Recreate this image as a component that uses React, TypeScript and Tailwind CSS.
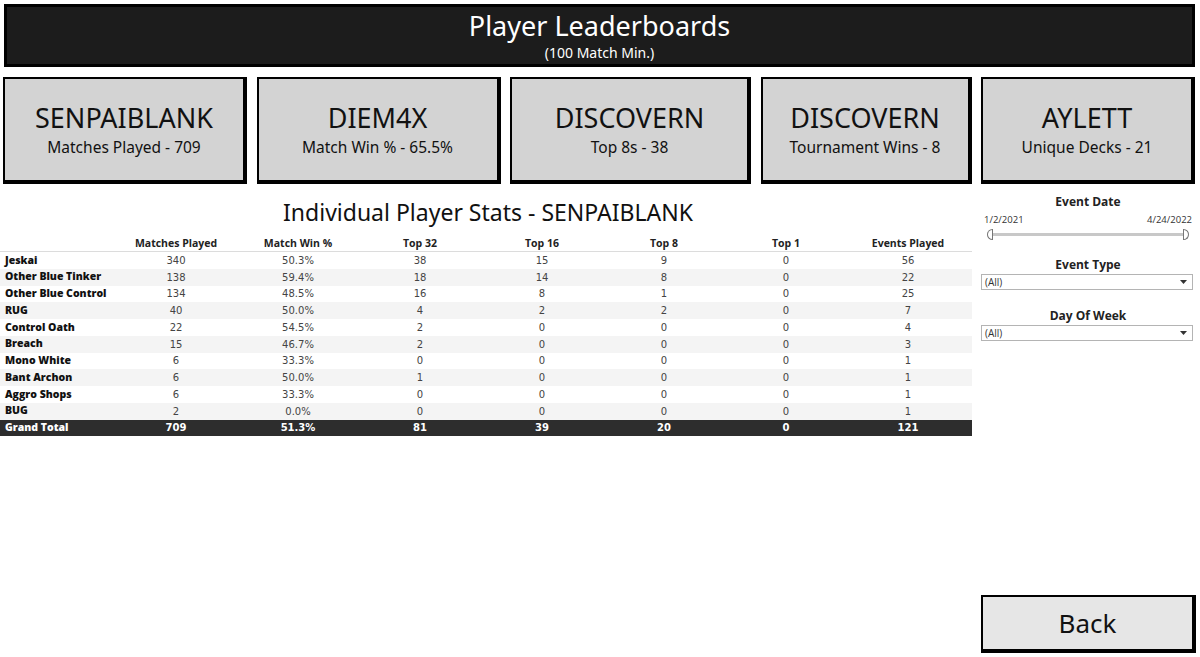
const rows = [
  ['Jeskai', '340', '50.3%', '38', '15', '9', '0', '56'],
  ['Other Blue Tinker', '138', '59.4%', '18', '14', '8', '0', '22'],
  ['Other Blue Control', '134', '48.5%', '16', '8', '1', '0', '25'],
  ['RUG', '40', '50.0%', '4', '2', '2', '0', '7'],
  ['Control Oath', '22', '54.5%', '2', '0', '0', '0', '4'],
  ['Breach', '15', '46.7%', '2', '0', '0', '0', '3'],
  ['Mono White', '6', '33.3%', '0', '0', '0', '0', '1'],
  ['Bant Archon', '6', '50.0%', '1', '0', '0', '0', '1'],
  ['Aggro Shops', '6', '33.3%', '0', '0', '0', '0', '1'],
  ['BUG', '2', '0.0%', '0', '0', '0', '0', '1'],
];

const total = ['Grand Total', '709', '51.3%', '81', '39', '20', '0', '121'];
const cols = ['Matches Played', 'Match Win %', 'Top 32', 'Top 16', 'Top 8', 'Top 1', 'Events Played'];

const cards = [
  { name: 'SENPAIBLANK', sub: 'Matches Played - 709', w: 'w-[244px]' },
  { name: 'DIEM4X', sub: 'Match Win % - 65.5%', w: 'w-[244px]' },
  { name: 'DISCOVERN', sub: 'Top 8s - 38', w: 'w-[241px]' },
  { name: 'DISCOVERN', sub: 'Tournament Wins - 8', w: 'w-[211px]' },
  { name: 'AYLETT', sub: 'Unique Decks - 21', w: 'w-[214px]' },
];

function Caret() {
  return (
    <svg width="7" height="4" viewBox="0 0 7 4" className="mr-[5px]">
      <path d="M0 0h7L3.5 4z" fill="#333" />
    </svg>
  );
}

function Dropdown() {
  return (
    <div className="flex items-center justify-between h-[16px] border border-[#b4b4b4] bg-white pl-[3px] mt-[1px] mr-[2px]">
      <span className="text-[10px] text-[#333] font-['Open_Sans',sans-serif]">(All)</span>
      <Caret />
    </div>
  );
}

export default function App() {
  const sans = "font-['Noto_Sans',sans-serif]";
  return (
    <div className={`w-[1200px] h-[657px] bg-white ${sans} relative overflow-hidden`}>
      <div className="pt-[4px] pl-[4px] pr-[5px]">
        <div className="h-[63px] bg-[#1c1c1c] border-[3px] border-black flex flex-col items-center text-white">
          <div className="text-[27px] leading-[34px] mt-[2px]">Player Leaderboards</div>
          <div className="text-[14px] leading-[18px] mt-[1px]">(100 Match Min.)</div>
        </div>
      </div>

      <div className="flex gap-[9.5px] pl-[3px] mt-[10px]">
        {cards.map((c, i) => (
          <div
            key={i}
            className={`${c.w} h-[107px] bg-[#d3d3d3] border-black border-t-[2px] border-l-[2px] border-r-[4px] border-b-[4px] flex flex-col items-center pt-[22px]`}
          >
            <div className="text-[27px] leading-[34px] text-[#111]">{c.name}</div>
            <div className="text-[15.5px] leading-[20px] text-[#111] mt-[2px]">{c.sub}</div>
          </div>
        ))}
      </div>

      <div className="flex mt-[11px]">
        <div className="w-[972px]">
          <div className="text-center text-[23px] leading-[30px] text-[#111] pl-[4px] mt-[2px]">
            Individual Player Stats - SENPAIBLANK
          </div>
          <div className="mt-[9px] flex h-[16px] items-center border-b border-[#dcdcdc] text-[10.5px] font-bold text-[#222] font-['Open_Sans',sans-serif]">
            <div className="w-[115px]" />
            {cols.map((c) => (
              <div key={c} className="w-[122px] text-center">{c}</div>
            ))}
          </div>
          {rows.map((r, i) => (
            <div
              key={r[0]}
              className={`flex h-[16.75px] items-center text-[10.5px] ${i % 2 ? 'bg-[#f4f4f4]' : 'bg-white'}`}
            >
              <div className="w-[115px] pl-[5px] font-extrabold text-[#111] font-['Open_Sans',sans-serif]">{r[0]}</div>
              {r.slice(1).map((v, j) => (
                <div key={j} className="w-[122px] text-center text-[#444] font-['DejaVu_Sans',sans-serif] text-[10px]">{v}</div>
              ))}
            </div>
          ))}
          <div className="flex h-[16.75px] items-center bg-[#2d2d2d] text-white text-[10.5px] font-bold">
            <div className="w-[115px] pl-[5px] font-extrabold font-['Open_Sans',sans-serif]">{total[0]}</div>
            {total.slice(1).map((v, j) => (
              <div key={j} className="w-[122px] text-center font-['DejaVu_Sans',sans-serif] text-[10px]">{v}</div>
            ))}
          </div>
        </div>

        <div className="w-[214px] ml-[9px] flex flex-col font-['Open_Sans',sans-serif]">
          <div className="text-center text-[12px] font-bold text-[#222] leading-[16px] -mt-[1px]">Event Date</div>
          <div className="flex justify-between text-[9.5px] text-[#333] mt-[4px] px-[3px] leading-[12px]">
            <span>1/2/2021</span>
            <span>4/24/2022</span>
          </div>
          <div className="relative h-[12px] mt-[3px] mx-[6px]">
            <div className="absolute left-0 right-0 top-[4px] h-[3px] bg-[#c8c8c8]" />
            <div className="absolute left-0 top-0 w-[6px] h-[11px] border border-[#777] bg-white rounded-l-full" />
            <div className="absolute right-0 top-0 w-[6px] h-[11px] border border-[#777] bg-white rounded-r-full" />
          </div>
          <div className="text-center text-[12px] font-bold text-[#222] leading-[16px] mt-[16px]">Event Type</div>
          <Dropdown />
          <div className="text-center text-[12px] font-bold text-[#222] leading-[16px] mt-[18px]">Day Of Week</div>
          <Dropdown />
        </div>
      </div>

      <div className="absolute left-[981px] top-[595px] w-[215px] h-[58px] bg-[#e6e6e6] border-black border-t-[2px] border-l-[2px] border-r-[4px] border-b-[4px] flex items-center justify-center">
        <span className="text-[26px] text-[#111]">Back</span>
      </div>
    </div>
  );
}
